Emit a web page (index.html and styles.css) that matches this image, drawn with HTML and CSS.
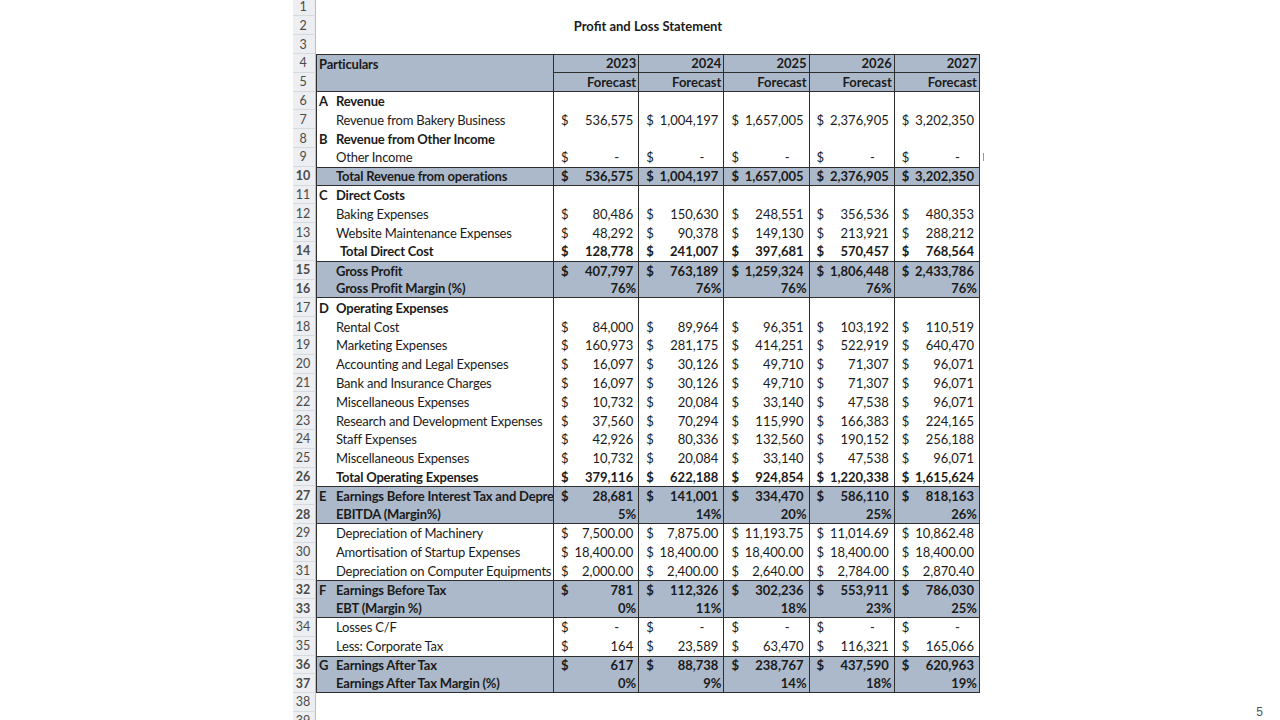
FILE: index.html
```html
<!DOCTYPE html>
<html>
<head>
<meta charset="utf-8">
<link rel="stylesheet" href="styles.css">
</head>
<body>
<div class="page">
  <div class="gutter"></div>
  <div class="sheet">
    <div class="r"><div class="rn">1</div></div>
    <div class="r"><div class="rn">2</div><div class="title">Profit and Loss Statement</div></div>
    <div class="r"><div class="rn">3</div></div>
    <div class="r t band bt hdr"><div class="rn">4</div><div class="p b">Particulars</div><div class="v y yb">2023</div><div class="v y yb">2024</div><div class="v y yb">2025</div><div class="v y yb">2026</div><div class="v y yb">2027</div></div>
    <div class="r t band bb hdr"><div class="rn">5</div><div class="p"></div><div class="v y">Forecast</div><div class="v y">Forecast</div><div class="v y">Forecast</div><div class="v y">Forecast</div><div class="v y">Forecast</div></div>
    <div class="r t"><div class="rn">6</div><div class="p b"><span class="lt">A</span>Revenue</div><div class="v"></div><div class="v"></div><div class="v"></div><div class="v"></div><div class="v"></div></div>
    <div class="r t"><div class="rn">7</div><div class="p"><span class="lt"></span>Revenue from Bakery Business</div><div class="v"><span>$</span><span>536,575</span></div><div class="v"><span>$</span><span>1,004,197</span></div><div class="v"><span>$</span><span>1,657,005</span></div><div class="v"><span>$</span><span>2,376,905</span></div><div class="v"><span>$</span><span>3,202,350</span></div></div>
    <div class="r t"><div class="rn">8</div><div class="p b"><span class="lt">B</span>Revenue from Other Income</div><div class="v"></div><div class="v"></div><div class="v"></div><div class="v"></div><div class="v"></div></div>
    <div class="r t"><div class="rn">9</div><div class="p"><span class="lt"></span>Other Income</div><div class="v"><span>$</span><span class="dash">-</span></div><div class="v"><span>$</span><span class="dash">-</span></div><div class="v"><span>$</span><span class="dash">-</span></div><div class="v"><span>$</span><span class="dash">-</span></div><div class="v"><span>$</span><span class="dash">-</span></div><div class="x"><span class="tick"></span></div></div>
    <div class="r t band bt bb b"><div class="rn">10</div><div class="p"><span class="lt"></span>Total Revenue from operations</div><div class="v"><span>$</span><span>536,575</span></div><div class="v"><span>$</span><span>1,004,197</span></div><div class="v"><span>$</span><span>1,657,005</span></div><div class="v"><span>$</span><span>2,376,905</span></div><div class="v"><span>$</span><span>3,202,350</span></div></div>
    <div class="r t"><div class="rn">11</div><div class="p b"><span class="lt">C</span>Direct Costs</div><div class="v"></div><div class="v"></div><div class="v"></div><div class="v"></div><div class="v"></div></div>
    <div class="r t"><div class="rn">12</div><div class="p"><span class="lt"></span>Baking Expenses</div><div class="v"><span>$</span><span>80,486</span></div><div class="v"><span>$</span><span>150,630</span></div><div class="v"><span>$</span><span>248,551</span></div><div class="v"><span>$</span><span>356,536</span></div><div class="v"><span>$</span><span>480,353</span></div></div>
    <div class="r t"><div class="rn">13</div><div class="p"><span class="lt"></span>Website Maintenance Expenses</div><div class="v"><span>$</span><span>48,292</span></div><div class="v"><span>$</span><span>90,378</span></div><div class="v"><span>$</span><span>149,130</span></div><div class="v"><span>$</span><span>213,921</span></div><div class="v"><span>$</span><span>288,212</span></div></div>
    <div class="r t b"><div class="rn">14</div><div class="p"><span class="lt"></span><span class="ind">Total Direct Cost</span></div><div class="v"><span>$</span><span>128,778</span></div><div class="v"><span>$</span><span>241,007</span></div><div class="v"><span>$</span><span>397,681</span></div><div class="v"><span>$</span><span>570,457</span></div><div class="v"><span>$</span><span>768,564</span></div></div>
    <div class="r t band bt b"><div class="rn">15</div><div class="p"><span class="lt"></span>Gross Profit</div><div class="v"><span>$</span><span>407,797</span></div><div class="v"><span>$</span><span>763,189</span></div><div class="v"><span>$</span><span>1,259,324</span></div><div class="v"><span>$</span><span>1,806,448</span></div><div class="v"><span>$</span><span>2,433,786</span></div></div>
    <div class="r t band bb b"><div class="rn">16</div><div class="p"><span class="lt"></span>Gross Profit Margin (%)</div><div class="v pct">76%</div><div class="v pct">76%</div><div class="v pct">76%</div><div class="v pct">76%</div><div class="v pct">76%</div></div>
    <div class="r t"><div class="rn">17</div><div class="p b"><span class="lt">D</span>Operating Expenses</div><div class="v"></div><div class="v"></div><div class="v"></div><div class="v"></div><div class="v"></div></div>
    <div class="r t"><div class="rn">18</div><div class="p"><span class="lt"></span>Rental Cost</div><div class="v"><span>$</span><span>84,000</span></div><div class="v"><span>$</span><span>89,964</span></div><div class="v"><span>$</span><span>96,351</span></div><div class="v"><span>$</span><span>103,192</span></div><div class="v"><span>$</span><span>110,519</span></div></div>
    <div class="r t"><div class="rn">19</div><div class="p"><span class="lt"></span>Marketing Expenses</div><div class="v"><span>$</span><span>160,973</span></div><div class="v"><span>$</span><span>281,175</span></div><div class="v"><span>$</span><span>414,251</span></div><div class="v"><span>$</span><span>522,919</span></div><div class="v"><span>$</span><span>640,470</span></div></div>
    <div class="r t"><div class="rn">20</div><div class="p"><span class="lt"></span>Accounting and Legal Expenses</div><div class="v"><span>$</span><span>16,097</span></div><div class="v"><span>$</span><span>30,126</span></div><div class="v"><span>$</span><span>49,710</span></div><div class="v"><span>$</span><span>71,307</span></div><div class="v"><span>$</span><span>96,071</span></div></div>
    <div class="r t"><div class="rn">21</div><div class="p"><span class="lt"></span>Bank and Insurance Charges</div><div class="v"><span>$</span><span>16,097</span></div><div class="v"><span>$</span><span>30,126</span></div><div class="v"><span>$</span><span>49,710</span></div><div class="v"><span>$</span><span>71,307</span></div><div class="v"><span>$</span><span>96,071</span></div></div>
    <div class="r t"><div class="rn">22</div><div class="p"><span class="lt"></span>Miscellaneous Expenses</div><div class="v"><span>$</span><span>10,732</span></div><div class="v"><span>$</span><span>20,084</span></div><div class="v"><span>$</span><span>33,140</span></div><div class="v"><span>$</span><span>47,538</span></div><div class="v"><span>$</span><span>96,071</span></div></div>
    <div class="r t"><div class="rn">23</div><div class="p"><span class="lt"></span>Research and Development Expenses</div><div class="v"><span>$</span><span>37,560</span></div><div class="v"><span>$</span><span>70,294</span></div><div class="v"><span>$</span><span>115,990</span></div><div class="v"><span>$</span><span>166,383</span></div><div class="v"><span>$</span><span>224,165</span></div></div>
    <div class="r t"><div class="rn">24</div><div class="p"><span class="lt"></span>Staff Expenses</div><div class="v"><span>$</span><span>42,926</span></div><div class="v"><span>$</span><span>80,336</span></div><div class="v"><span>$</span><span>132,560</span></div><div class="v"><span>$</span><span>190,152</span></div><div class="v"><span>$</span><span>256,188</span></div></div>
    <div class="r t"><div class="rn">25</div><div class="p"><span class="lt"></span>Miscellaneous Expenses</div><div class="v"><span>$</span><span>10,732</span></div><div class="v"><span>$</span><span>20,084</span></div><div class="v"><span>$</span><span>33,140</span></div><div class="v"><span>$</span><span>47,538</span></div><div class="v"><span>$</span><span>96,071</span></div></div>
    <div class="r t b"><div class="rn">26</div><div class="p"><span class="lt"></span>Total Operating Expenses</div><div class="v"><span>$</span><span>379,116</span></div><div class="v"><span>$</span><span>622,188</span></div><div class="v"><span>$</span><span>924,854</span></div><div class="v"><span>$</span><span>1,220,338</span></div><div class="v"><span>$</span><span>1,615,624</span></div></div>
    <div class="r t band bt b"><div class="rn">27</div><div class="p"><span class="lt">E</span>Earnings Before Interest Tax and Depreciation</div><div class="v"><span>$</span><span>28,681</span></div><div class="v"><span>$</span><span>141,001</span></div><div class="v"><span>$</span><span>334,470</span></div><div class="v"><span>$</span><span>586,110</span></div><div class="v"><span>$</span><span>818,163</span></div></div>
    <div class="r t band bb b"><div class="rn">28</div><div class="p"><span class="lt"></span>EBITDA (Margin%)</div><div class="v pct">5%</div><div class="v pct">14%</div><div class="v pct">20%</div><div class="v pct">25%</div><div class="v pct">26%</div></div>
    <div class="r t"><div class="rn">29</div><div class="p"><span class="lt"></span>Depreciation of Machinery</div><div class="v"><span>$</span><span>7,500.00</span></div><div class="v"><span>$</span><span>7,875.00</span></div><div class="v"><span>$</span><span>11,193.75</span></div><div class="v"><span>$</span><span>11,014.69</span></div><div class="v"><span>$</span><span>10,862.48</span></div></div>
    <div class="r t"><div class="rn">30</div><div class="p"><span class="lt"></span>Amortisation of Startup Expenses</div><div class="v"><span>$</span><span>18,400.00</span></div><div class="v"><span>$</span><span>18,400.00</span></div><div class="v"><span>$</span><span>18,400.00</span></div><div class="v"><span>$</span><span>18,400.00</span></div><div class="v"><span>$</span><span>18,400.00</span></div></div>
    <div class="r t"><div class="rn">31</div><div class="p"><span class="lt"></span>Depreciation on Computer Equipments</div><div class="v"><span>$</span><span>2,000.00</span></div><div class="v"><span>$</span><span>2,400.00</span></div><div class="v"><span>$</span><span>2,640.00</span></div><div class="v"><span>$</span><span>2,784.00</span></div><div class="v"><span>$</span><span>2,870.40</span></div></div>
    <div class="r t band bt b"><div class="rn">32</div><div class="p"><span class="lt">F</span>Earnings Before Tax</div><div class="v"><span>$</span><span>781</span></div><div class="v"><span>$</span><span>112,326</span></div><div class="v"><span>$</span><span>302,236</span></div><div class="v"><span>$</span><span>553,911</span></div><div class="v"><span>$</span><span>786,030</span></div></div>
    <div class="r t band bb b"><div class="rn">33</div><div class="p"><span class="lt"></span>EBT (Margin %)</div><div class="v pct">0%</div><div class="v pct">11%</div><div class="v pct">18%</div><div class="v pct">23%</div><div class="v pct">25%</div></div>
    <div class="r t"><div class="rn">34</div><div class="p"><span class="lt"></span>Losses C/F</div><div class="v"><span>$</span><span class="dash">-</span></div><div class="v"><span>$</span><span class="dash">-</span></div><div class="v"><span>$</span><span class="dash">-</span></div><div class="v"><span>$</span><span class="dash">-</span></div><div class="v"><span>$</span><span class="dash">-</span></div></div>
    <div class="r t"><div class="rn">35</div><div class="p"><span class="lt"></span>Less: Corporate Tax</div><div class="v"><span>$</span><span>164</span></div><div class="v"><span>$</span><span>23,589</span></div><div class="v"><span>$</span><span>63,470</span></div><div class="v"><span>$</span><span>116,321</span></div><div class="v"><span>$</span><span>165,066</span></div></div>
    <div class="r t band bt b"><div class="rn">36</div><div class="p"><span class="lt">G</span>Earnings After Tax</div><div class="v"><span>$</span><span>617</span></div><div class="v"><span>$</span><span>88,738</span></div><div class="v"><span>$</span><span>238,767</span></div><div class="v"><span>$</span><span>437,590</span></div><div class="v"><span>$</span><span>620,963</span></div></div>
    <div class="r t band bb b"><div class="rn">37</div><div class="p"><span class="lt"></span>Earnings After Tax Margin (%)</div><div class="v pct">0%</div><div class="v pct">9%</div><div class="v pct">14%</div><div class="v pct">18%</div><div class="v pct">19%</div></div>
    <div class="r"><div class="rn">38</div></div>
    <div class="r"><div class="rn">39</div></div>
  </div>
  <div class="pageno">5</div>
</div>
</body>
</html>
```

FILE: styles.css
```css
html, body {
  margin: 0;
  padding: 0;
  background: #ffffff;
}

.page {
  width: 1280px;
  height: 720px;
  overflow: hidden;
  display: grid;
  grid-template-columns: 293px auto 1fr;
  grid-template-rows: 720px;
  font-family: Lato, "Liberation Sans", sans-serif;
  font-size: 13px;
  color: #1b1b1b;
}

.sheet {
  margin-top: -2.4px;
}

.r {
  display: grid;
  grid-template-columns: 23px 238px repeat(5, 85.2px) 14px;
  height: 18.8px;
}

.r > div {
  box-sizing: border-box;
  height: 18.8px;
  display: flex;
  align-items: center;
  white-space: nowrap;
}

.rn {
  background: #eceef1;
  border-bottom: 1px solid #d6d9de;
  border-right: 1px solid #b9bec6;
  justify-content: center;
  color: #4a4a4a;
  font-size: 12.5px;
  padding-right: 2px;
}

.title {
  grid-column: 2 / 8;
  justify-content: center;
  font-weight: 700;
}

.p {
  overflow: hidden;
  padding-left: 2px;
  letter-spacing: -0.2px;
}

.lt {
  display: inline-block;
  width: 17px;
  flex: none;
  letter-spacing: 0;
}

.ind {
  padding-left: 4px;
}

.t .p {
  border-left: 1px solid #2e2e2e;
  border-right: 1px solid #2e2e2e;
}

.t .v {
  border-right: 1px solid #2e2e2e;
}

.v {
  justify-content: space-between;
  padding: 0 5px 0 7px;
  font-variant-numeric: tabular-nums;
}

.v.pct,
.v.y {
  justify-content: flex-end;
  padding-right: 2px;
}

.dash {
  padding-right: 14px;
}

.b,
.hdr .v {
  font-weight: 700;
}

.band .p,
.band .v {
  background: #acb9ca;
}

.bt .p,
.bt .v {
  border-top: 1px solid #2e2e2e;
}

.bb .p,
.bb .v,
.v.yb {
  border-bottom: 1px solid #2e2e2e;
}

.x {
  padding-left: 3px;
}

.tick {
  display: block;
  width: 1px;
  height: 8px;
  background: #a8957e;
}

.pageno {
  align-self: end;
  justify-self: end;
  margin: 0 17px 1px 0;
  font-family: "Liberation Sans", sans-serif;
  font-size: 12px;
  color: #555555;
}
```
